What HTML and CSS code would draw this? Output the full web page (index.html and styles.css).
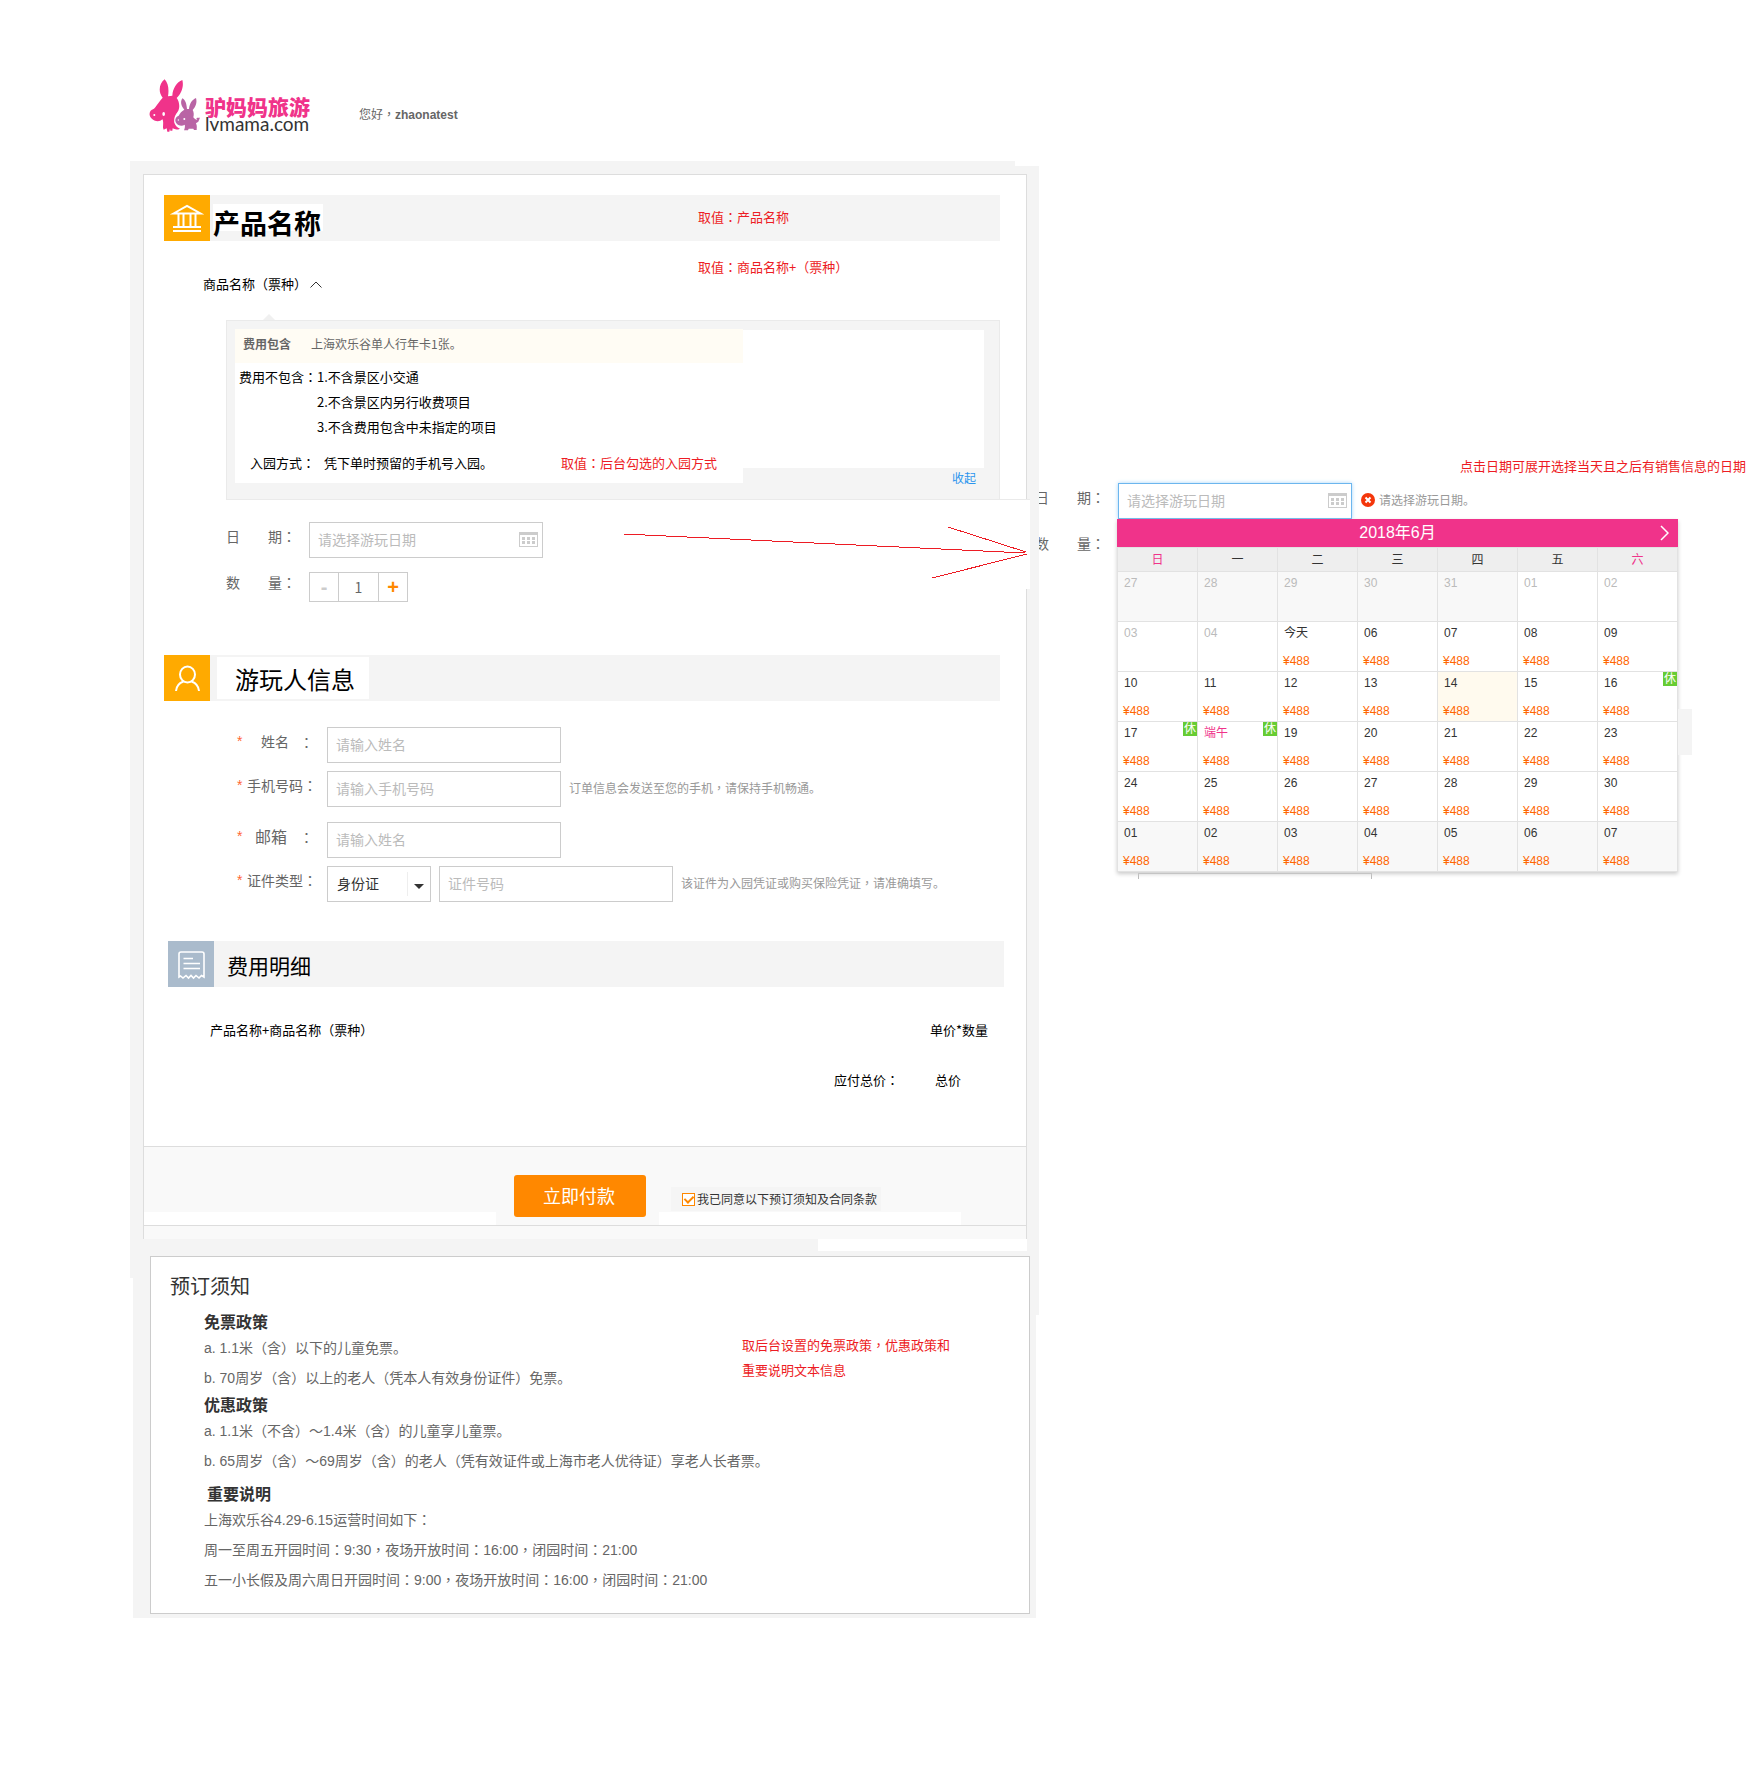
FILE: index.html
```html
<!DOCTYPE html>
<html lang="zh-CN">
<head>
<meta charset="utf-8">
<title>驴妈妈旅游</title>
<link rel="stylesheet" href="styles.css">
</head>
<body>
<header class="top">
  <a class="logo" href="#">
    <svg class="logo-mark" viewBox="87 57 156 162" aria-hidden="true">
      <g fill="#f0338a">
        <path d="M128 113C114 98 117 70 134 58C146 70 147 92 144 109L157 107C158 86 170 66 187 60C192 78 185 100 170 114C179 126 180 143 174 154C164 166 161 178 163 188C166 197 172 203 180 206C172 210 164 209 158 205L157 212H151L150 206L148 215H142L140 205L131 209L129 203C129 193 131 184 127 178C120 186 104 186 94 175C85 164 88 152 99 148C107 143 113 130 128 113Z"/>
      </g>
      <g fill="#b964a5">
        <path d="M193 149C182 137 181 124 187 115C197 120 200 134 201 147L207 147C209 131 216 119 228 114C232 127 227 141 218 150C222 157 222 165 220 172C224 178 229 180 232 179C227 175 230 171 235 174C239 170 241 175 237 180C236 187 230 188 228 190C232 198 230 205 230 210H222L220 206H206L204 211H192C194 205 196 199 194 194C186 200 173 197 168 188C163 178 168 170 176 167C180 159 185 153 193 149Z"/>
      </g>
      <g fill="#fff"><ellipse cx="131" cy="162" rx="4" ry="6"/><circle cx="103" cy="165" r="3"/><circle cx="193" cy="177" r="3"/><circle cx="175" cy="180" r="2"/></g>
    </svg>
    <span class="logo-words"><b>驴妈妈旅游</b><i>lvmama.com</i></span>
  </a>
  <p class="hello">您好<span class="w">，</span><b>zhaonatest</b></p>
</header>

<main class="board">
  <div class="shell">
    <form class="order">
      <section>
        <div class="bar">
          <span class="bar-icon"><svg viewBox="0 0 46 46" aria-hidden="true"><path d="M9.500 18.500L23 11L36.500 18.500ZM14.500 18V31M19.500 18V31M26.500 18V31M31.500 18V31" fill="none" stroke="#fff" stroke-width="2"/><path d="M9 31H37V33H9ZM9 35H37V37H9Z" fill="#fff"/></svg></span>
          <h1 class="bar-title bar-title-strong">产品名称</h1>
          <span class="note note-product">取值<span class="w">：</span>产品名称</span>
        </div>
        <div class="goods">
          <span>商品名称<span class="w">（</span>票种<span class="w">）</span></span>
          <svg class="fold" viewBox="0 0 12 7" aria-hidden="true"><path d="M.5 6.500L6 1L11.500 6.500" fill="none" stroke="#333"/></svg>
          <span class="note note-goods">取值<span class="w">：</span>商品名称+<span class="w">（</span>票种<span class="w">）</span></span>
        </div>
        <div class="detail">
          <div class="detail-main">
            <p class="include"><b>费用包含</b><span>上海欢乐谷单人行年卡1张。</span></p>
            <div class="exclude"><span>费用不包含<span class="w">：</span></span>
              <ol><li>1.不含景区小交通</li><li>2.不含景区内另行收费项目</li><li>3.不含费用包含中未指定的项目</li></ol>
            </div>
            <p class="entry"><span>入园方式<span class="w">：</span></span><span class="entry-way">凭下单时预留的手机号入园。</span><span class="red">取值<span class="w">：</span>后台勾选的入园方式</span></p>
          </div>
          <div class="detail-side"><div class="blank"></div><a href="#">收起</a></div>
        </div>
        <div class="booking">
          <div class="field"><label class="wide" for="date"><span>日</span><span>期<span class="w">：</span></span></label>
            <span class="date"><input class="box" id="date" type="text" placeholder="请选择游玩日期"><svg class="cal-icon" viewBox="0 0 19 15" aria-hidden="true"><path d="M0 0H19V15H0ZM1 3V14H18V3Z" fill-rule="evenodd" fill="#ccc"/><path d="M3 5h3v3H3ZM8 5h3v3H8ZM13 5h3v3H13ZM3 9h3v3H3ZM8 9h3v3H8ZM13 9h3v3H13Z" fill="#ccc"/></svg></span></div>
          <div class="field"><label class="wide wide-low" for="count"><span>数</span><span>量<span class="w">：</span></span></label>
            <span class="stepper"><button type="button" class="minus">-</button><input id="count" type="text" value="1"><button type="button" class="plus">+</button></span></div>
          <svg class="arrow" viewBox="0 0 406 56" aria-hidden="true"><path d="M0 9L401 28M324 2L402 27M308 53L403 29" fill="none" stroke="#ed1c24" shape-rendering="crispEdges"/></svg>
        </div>
      </section>

      <section>
        <div class="bar">
          <span class="bar-icon"><svg viewBox="0 0 46 46" aria-hidden="true"><ellipse cx="23.500" cy="19.500" rx="7.500" ry="8" fill="none" stroke="#fff" stroke-width="2"/><path d="M12 36C12.500 31 15 28 19.500 26.500M27.500 26.500C32 28 34.500 31 35 36" fill="none" stroke="#fff" stroke-width="2"/></svg></span>
          <h2 class="bar-title bar-title-plate">游玩人信息</h2>
        </div>
        <div class="guest">
          <div class="field"><label for="name"><em>*</em><span class="mid">姓名</span><span class="w">：</span></label><input class="box" id="name" type="text" placeholder="请输入姓名"></div>
          <div class="field"><label for="phone"><em>*</em><span>手机号码<span class="w">：</span></span></label><input class="box" id="phone" type="text" placeholder="请输入手机号码"><span class="hint">订单信息会发送至您的手机<span class="w">，</span>请保持手机畅通。</span></div>
          <div class="field mail"><label for="mail"><em>*</em><span class="mid big">邮箱</span><span class="w">：</span></label><input class="box" id="mail" type="text" placeholder="请输入姓名"></div>
          <div class="field"><label for="kind"><em>*</em><span>证件类型<span class="w">：</span></span></label>
            <span class="pick"><select id="kind"><option>身份证</option></select></span>
            <input class="box" type="text" placeholder="证件号码" aria-label="证件号码"><span class="hint">该证件为入园凭证或购买保险凭证<span class="w">，</span>请准确填写。</span></div>
        </div>
      </section>

      <section class="cost">
        <div class="bar">
          <span class="bar-icon bar-icon-blue"><svg viewBox="0 0 46 46" aria-hidden="true"><path d="M11 36V13Q11 11 13 11H34Q36 11 36 13V36L33.500 34.500L31 37L28 34.500L25.500 37L23 34.500L20.500 37L18 34.500L15 37L12.500 35ZM15.500 17.500H25M15.500 22.500H32M15.500 27.500H32" fill="none" stroke="#fff" stroke-width="1.600"/></svg></span>
          <h2 class="bar-title bar-title-cost">费用明细</h2>
        </div>
        <div class="cost-row"><span>产品名称+商品名称<span class="w">（</span>票种<span class="w">）</span></span><span>单价*数量</span></div>
        <div class="cost-sum"><span>应付总价<span class="w">：</span></span><span>总价</span></div>
      </section>

      <div class="pay">
        <button type="submit" class="pay-btn">立即付款</button>
        <label class="agree"><input type="checkbox" checked><span>我已同意以下预订须知及合同条款</span></label>
      </div>
      <div class="strip"></div>
    </form>

    <section class="rules">
      <h2>预订须知</h2>
      <h3>免票政策</h3>
      <p>a. 1.1米<span class="w">（</span>含<span class="w">）</span>以下的儿童免票。</p>
      <p>b. 70周岁<span class="w">（</span>含<span class="w">）</span>以上的老人<span class="w">（</span>凭本人有效身份证件<span class="w">）</span>免票。</p>
      <h3>优惠政策</h3>
      <p>a. 1.1米<span class="w">（</span>不含<span class="w">）</span>～1.4米<span class="w">（</span>含<span class="w">）</span>的儿童享儿童票。</p>
      <p>b. 65周岁<span class="w">（</span>含<span class="w">）</span>～69周岁<span class="w">（</span>含<span class="w">）</span>的老人<span class="w">（</span>凭有效证件或上海市老人优待证<span class="w">）</span>享老人长者票。</p>
      <h3 class="apart">重要说明</h3>
      <p>上海欢乐谷4.29-6.15运营时间如下<span class="w">：</span></p>
      <p>周一至周五开园时间<span class="w">：</span>9:30<span class="w">，</span>夜场开放时间<span class="w">：</span>16:00<span class="w">，</span>闭园时间<span class="w">：</span>21:00</p>
      <p>五一小长假及周六周日开园时间<span class="w">：</span>9:00<span class="w">，</span>夜场开放时间<span class="w">：</span>16:00<span class="w">，</span>闭园时间<span class="w">：</span>21:00</p>
      <p class="note note-rules">取后台设置的免票政策<span class="w">，</span>优惠政策和<br>重要说明文本信息</p>
    </section>
  </div>

  <aside class="picker">
    <p class="picker-note">点击日期可展开选择当天且之后有销售信息的日期</p>
    <div class="picker-body">
      <div class="picker-labels"><label for="pick-date"><span class="cut">日</span><span>期<span class="w">：</span></span></label><p><span class="cut">数</span><span>量<span class="w">：</span></span></p></div>
      <div class="picker-field">
        <div class="picker-line">
          <span class="date"><input class="box focus" id="pick-date" type="text" placeholder="请选择游玩日期"><svg class="cal-icon" viewBox="0 0 19 15" aria-hidden="true"><path d="M0 0H19V15H0ZM1 3V14H18V3Z" fill-rule="evenodd" fill="#ccc"/><path d="M3 5h3v3H3ZM8 5h3v3H8ZM13 5h3v3H13ZM3 9h3v3H3ZM8 9h3v3H8ZM13 9h3v3H13Z" fill="#ccc"/></svg></span>
          <svg class="err" viewBox="0 0 14 14" aria-hidden="true"><circle cx="7" cy="7" r="7" fill="#f4360b"/><path d="M4.500 4.500L9.500 9.500M9.500 4.500L4.500 9.500" stroke="#fff" stroke-width="2"/></svg>
          <span class="hint">请选择游玩日期。</span>
        </div>
        <div class="cal">
          <div class="cal-head">2018年6月<button type="button" aria-label="下个月"><svg viewBox="0 0 9 16" aria-hidden="true"><path d="M1 1L8 8L1 15" fill="none" stroke="#fff" stroke-width="1.500"/></svg></button></div>
          <table>
            <thead><tr><th class="pink">日</th><th>一</th><th>二</th><th>三</th><th>四</th><th>五</th><th class="pink">六</th></tr></thead>
            <tbody>
              <tr><td class="out off">27</td><td class="out off">28</td><td class="out off">29</td><td class="out off">30</td><td class="out off">31</td><td class="off">01</td><td class="off">02</td></tr>
              <tr><td class="off">03</td><td class="off">04</td><td>今天<b>¥488</b></td><td>06<b>¥488</b></td><td>07<b>¥488</b></td><td>08<b>¥488</b></td><td>09<b>¥488</b></td></tr>
              <tr><td>10<b>¥488</b></td><td>11<b>¥488</b></td><td>12<b>¥488</b></td><td>13<b>¥488</b></td><td class="hot">14<b>¥488</b></td><td>15<b>¥488</b></td><td>16<b>¥488</b><i>休</i></td></tr>
              <tr><td>17<b>¥488</b><i>休</i></td><td><span class="pink">端午</span><b>¥488</b><i>休</i></td><td>19<b>¥488</b></td><td>20<b>¥488</b></td><td>21<b>¥488</b></td><td>22<b>¥488</b></td><td>23<b>¥488</b></td></tr>
              <tr><td>24<b>¥488</b></td><td>25<b>¥488</b></td><td>26<b>¥488</b></td><td>27<b>¥488</b></td><td>28<b>¥488</b></td><td>29<b>¥488</b></td><td>30<b>¥488</b></td></tr>
              <tr><td class="out">01<b>¥488</b></td><td class="out">02<b>¥488</b></td><td class="out">03<b>¥488</b></td><td class="out">04<b>¥488</b></td><td class="out">05<b>¥488</b></td><td class="out">06<b>¥488</b></td><td class="out">07<b>¥488</b></td></tr>
            </tbody>
          </table>
        </div>
        <div class="under"></div>
      </div>
    </div>
  </aside>
</main>
</body>
</html>
```
FILE: styles.css
```css
* { box-sizing: border-box; }
body, h1, h2, h3, p, ol { margin: 0; padding: 0; }
body {
  background: #fff;
  color: #000;
  font: 13px/20px "Noto Sans CJK SC", sans-serif;
}
ol { list-style: none; }
a { text-decoration: none; }
em, i { font-style: normal; }
input, button, select { font: inherit; margin: 0; }
span, label, p, h1, h2, h3, li { white-space: nowrap; }

/* full-width punctuation, centred in its cell */
.w { -webkit-locale: "zh-TW"; }

/* header */
.top { display: flex; height: 161px; padding: 79px 0 0 149px; }
.logo { display: flex; gap: 4px; width: 210px; }
.logo-mark { width: 52px; height: 54px; }
.logo-words { display: flex; flex-direction: column; padding-top: 17px; }
.logo-words b { color: #f0338a; font-size: 21px; line-height: 20px; font-weight: 900; }
.logo-words i { color: #333; font: 19px/16px Lato, sans-serif; }
.hello { padding-top: 26px; color: #666; font: 12px/20px "Liberation Sans", "Noto Sans CJK SC", sans-serif; }

/* two columns */
.board {
  display: grid;
  grid-template-columns: minmax(0, 909fr) minmax(0, 709fr);
  align-items: start;
  padding-left: 130px;
}
.shell {
  position: relative; padding: 13px 0 4px;
  background: linear-gradient(#fff, #fff) 100% 0 / 24px 5px no-repeat, #f4f4f4;
}
.shell::before, .shell::after { content: ""; position: absolute; background: #fff; bottom: 0; width: 3px; }
.shell::before { left: 0; height: 340px; }
.shell::after { right: 0; height: 303px; }

/* order card */
.order {
  position: relative;
  margin: 0 12px 17px 13px;
  padding-top: 20px;
  background: #fff;
  border: 1px solid #ddd;
  border-bottom: 0;
}
.bar { position: relative; display: flex; height: 46px; margin: 0 26px 0 20px; background: #f4f4f4; }
.bar-icon { width: 46px; height: 46px; background: #fa0; }
.bar-icon-blue { background: #abc; }
.bar-icon svg { display: block; width: 46px; height: 46px; }
.bar-title { font-weight: 400; }
.bar-title-strong {
  height: 27px; margin: 9px 0 0 3px; padding-right: 2px;
  background: #fff;
  font-size: 27px; line-height: 38px; font-weight: 700;
}
.bar-title-plate { height: 42px; margin: 2px 0 0 7px; padding: 0 14px 0 18px; background: #fff; font-size: 24px; line-height: 44px; }
.bar-title-cost { margin-left: 13px; font-size: 21px; line-height: 48px; }
.note, .red { color: #ed1c24; }
.note { position: absolute; }
.note-product { left: 534px; top: 12px; }
.note-goods { left: 554px; top: 16px; }

.goods { position: relative; display: flex; gap: 3px; padding: 33px 0 26px 59px; }
.fold { width: 12px; height: 7px; margin-top: 7px; }

.detail {
  position: relative;
  display: grid;
  grid-template-columns: minmax(0, 508fr) minmax(0, 241fr);
  margin: 0 26px 0 82px;
  padding: 8px 15px 0 8px;
  background: #f4f4f4;
  border: 1px solid #eaeaea;
}
.detail::before {
  content: ""; position: absolute; left: 36px; top: -7px;
  border: 6px solid transparent; border-top: 0; border-bottom-color: #f0f0f0;
}
.detail-main { margin-bottom: 16px; padding-bottom: 8px; background: #fff; }
.include { display: flex; gap: 20px; padding: 0 0 4px 8px; background: #fffcf4; color: #666; font-size: 12px; line-height: 30px; }
.exclude { display: flex; padding: 1px 0 0 4px; line-height: 25px; }
.entry { display: flex; margin-top: 11px; padding-left: 15px; line-height: 25px; }
.entry-way { width: 246px; padding-left: 9px; }
.detail-side { display: flex; flex-direction: column; padding-top: 1px; }
.blank { flex: 1; background: #fff; }
.detail-side a { padding: 0 8px 11px 0; text-align: right; color: #2b95ee; font-size: 12px; }

.field { display: flex; align-items: flex-start; color: #666; font-size: 14px; }
.field label { line-height: 28px; }
.box {
  width: 234px; height: 36px; padding: 0 8px 2px;
  border: 1px solid #ccc; background: #fff; color: #333;
  font-size: 14px; outline: 0;
}
::placeholder { color: #bbb; opacity: 1; }
.date { position: relative; }
.date .box { display: block; }
.cal-icon { position: absolute; right: 5px; top: 10px; width: 19px; height: 15px; }

.booking { position: relative; display: grid; gap: 14px; padding: 22px 0 53px 82px; }
.booking::before {
  content: ""; position: absolute; right: -4px; top: -1px; width: 30px; height: 89px;
  background: #fff; border-top: 1px solid #eaeaea;
}
.field .wide { display: flex; gap: 28px; width: 83px; }
.field .wide-low { line-height: 20px; }
.stepper { display: flex; width: 99px; height: 30px; border: 1px solid #ccc; }
.stepper input { width: 41px; border: solid #ccc; border-width: 0 1px; padding: 0; text-align: center; color: #666; background: #fff; }
.stepper button { flex: 1; padding: 0; border: 0; background: #fff; font: 700 20px/24px "Liberation Sans", sans-serif; }
.stepper .minus { color: #ccc; }
.stepper .plus { color: #f80; }
.arrow { position: absolute; left: 480px; top: 25px; width: 406px; height: 56px; }

.guest { display: grid; gap: 8px; padding: 26px 0 39px 93px; }
.field.mail { margin-top: 7px; }
.guest label { display: flex; width: 90px; }
.guest label em { width: 10px; color: #f63; font: 14px/28px "Liberation Sans", sans-serif; }
.guest .mid { width: 56px; padding-left: 14px; }
.guest .big { font-size: 16px; padding-left: 8px; }
.hint { color: #999; font-size: 12px; line-height: 34px; padding-left: 8px; }
.pick { position: relative; width: 104px; margin-right: 8px; }
.pick select {
  width: 104px; height: 36px; padding: 0 9px 2px; border: 1px solid #ccc;
  background: #fff; color: #333; font-size: 14px; appearance: none;
}
.pick::before { content: ""; position: absolute; right: 23px; top: 6px; height: 24px; border-left: 1px solid #eee; }
.pick::after { content: ""; position: absolute; right: 7px; top: 18px; border: 5px solid transparent; border-bottom: 0; border-top-color: #333; }

.cost { padding-bottom: 56px; }
.cost .bar { margin: 0 22px 0 24px; }
.cost-row { display: flex; justify-content: space-between; padding: 33px 38px 0 66px; }
.cost-sum { display: flex; justify-content: flex-end; gap: 36px; padding: 30px 65px 0 0; }

.pay {
  position: relative; display: flex; gap: 25px; align-items: flex-start;
  padding: 28px 0 8px 370px;
  background: linear-gradient(#fff, #fff) 0 100% / 352px 13px no-repeat, linear-gradient(#fff, #fff) 515px 100% / 302px 13px no-repeat, #f9f9f9;
  border: solid #ddd; border-width: 1px 0;
}
.pay-btn { width: 132px; height: 42px; padding: 0 2px 2px 0; border: 0; border-radius: 3px; background: #f80; color: #fff; font-size: 18px; }
.agree { display: flex; align-items: center; gap: 2px; margin-top: 12px; padding: 0 4px 0 11px; background: #f5f5f5; color: #333; font-size: 12px; line-height: 22px; height: 24px; }
.agree input { appearance: none; width: 13px; height: 13px; border: 1px solid #f80; background: #fff; display: grid; place-items: center; }
.agree input:checked::after { content: ""; width: 4px; height: 7px; margin-top: -2px; border: solid #f80; border-width: 0 2px 2px 0; transform: rotate(45deg); }
.strip { height: 13px; background: #f9f9f9; position: relative; }
.strip::after { content: ""; position: absolute; right: -1px; top: 13px; width: 209px; height: 12px; background: #fff; }

/* rules */
.rules {
  position: relative; margin: 0 9px 0 20px; padding: 14px 19px 18px 53px;
  background: #fff; border: 1px solid #ccc; color: #666;
}
.rules h2 { margin: 0 0 9px -34px; color: #333; font-size: 20px; line-height: 30px; font-weight: 400; }
.rules h3 { color: #333; font-size: 16px; line-height: 23px; font-weight: 700; }
.rules .apart { margin-top: 6px; padding-left: 3px; }
.rules p { font: 14px/30px "Liberation Sans", "Noto Sans CJK SC", sans-serif; }
.rules .note-rules { left: 591px; top: 75px; color: #ed1c24; font: 13px/25px "Noto Sans CJK SC", sans-serif; }

/* date picker */
.picker { padding-top: 295px; color: #666; font-size: 14px; }
.picker-note { padding-right: 2px; color: #ed1c24; font-size: 13px; text-align: right; }
.picker-body { display: flex; padding-top: 7px; }
.picker-labels { width: 79px; flex: none; line-height: 28px; }
.picker-labels label, .picker-labels p { display: flex; gap: 28px; }
.picker-labels p { margin-top: 18px; }
.cut { display: flex; justify-content: flex-end; width: 10px; overflow: hidden; }
.picker-line { display: flex; }
.focus { border: 1px solid #6cb6ee; box-shadow: 0 0 4px #a8d6f8; }
.err { width: 14px; height: 14px; margin: 10px 0 0 9px; }
.picker-line .hint { padding-left: 4px; }
.cal { position: relative; width: 561px; margin-left: -1px; box-shadow: 0 2px 4px #ccc; background: #fff; }
.cal-head { position: relative; height: 28px; background: #f0338a; color: #fff; font: 16px/28px "Liberation Sans", "Noto Sans CJK SC", sans-serif; text-align: center; }
.cal-head button { position: absolute; right: 9px; top: 6px; width: 9px; height: 16px; padding: 0; border: 0; background: none; }
.cal-head svg { display: block; }
.cal table { width: 561px; border-collapse: collapse; table-layout: fixed; color: #333; font: 12px/20px "Liberation Sans", "Noto Sans CJK SC", sans-serif; }
.cal th { height: 24px; padding: 0; border: 1px solid #e2e2e2; background: #eee; font-weight: 400; }
.cal td { position: relative; height: 50px; padding: 0 0 0 6px; border: 1px solid #e2e2e2; vertical-align: top; line-height: 22px; }
.cal td b { position: absolute; left: 5px; top: 28px; color: #f60; font-weight: 400; }
.cal td i { position: absolute; right: 0; top: 0; width: 14px; height: 14px; background: #6c3; color: #fff; line-height: 14px; text-align: center; }
.pink, .cal th.pink { color: #f0338a; }
.cal .off { color: #bbb; }
.cal .out { background: #f8f8f8; }
.cal .hot { background: #fffaee; }
.cal::after { content: ""; position: absolute; left: 100%; top: 190px; width: 14px; height: 46px; background: #f4f4f4; }
.under { width: 234px; height: 6px; margin: 1px 0 0 20px; border: 1px solid #bbb; border-bottom: 0; }
```
